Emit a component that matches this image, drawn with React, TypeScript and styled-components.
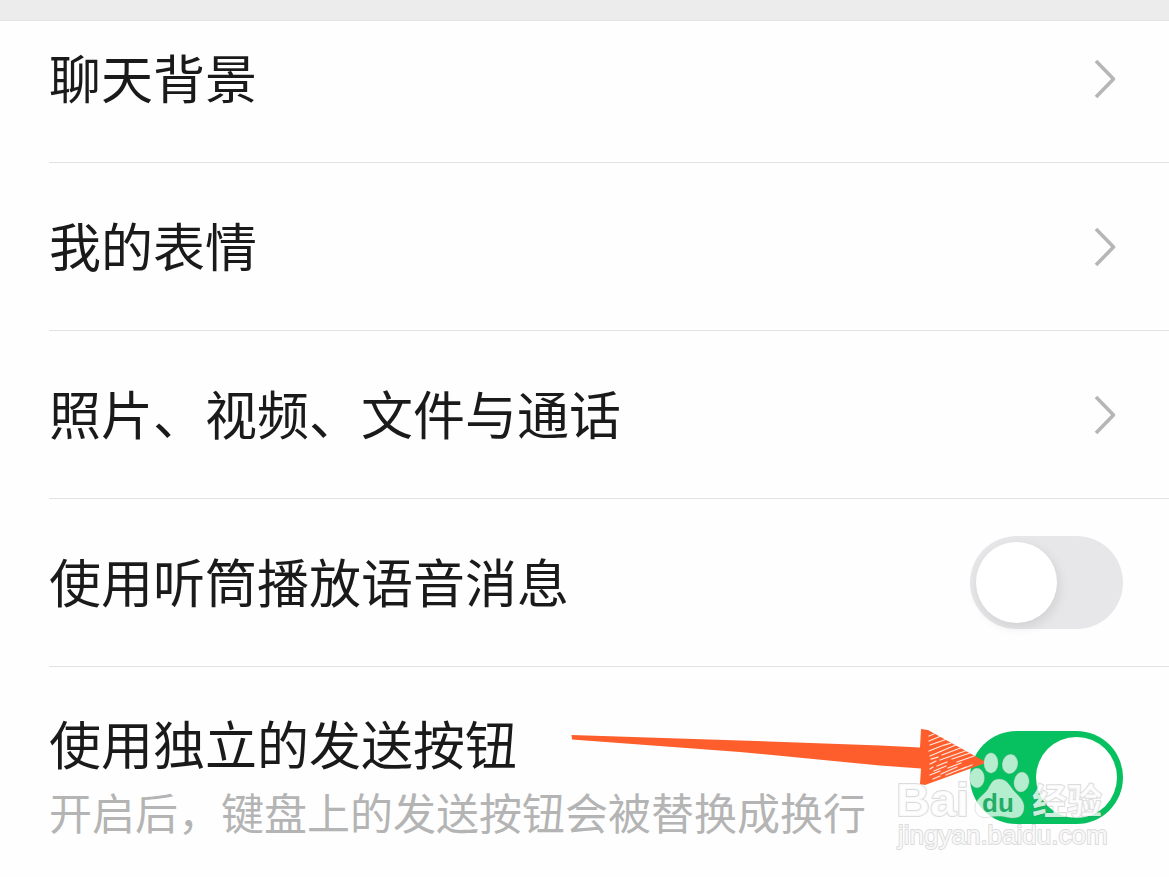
import React, { useState } from "react";
import styled, { createGlobalStyle } from "styled-components";

const GlobalStyle = createGlobalStyle`
  * { box-sizing: border-box; }
  body {
    margin: 0;
    background: #fefefe;
    font-family: "Noto Sans CJK SC", "Liberation Sans", sans-serif;
    color: #1a1a1a;
  }
`;

const Page = styled.main`
  min-height: 100vh;
  overflow: hidden;
`;

const SectionGap = styled.div`
  height: 21px;
  background: #ececec;
  border-bottom: 1px solid #e4e4e4;
`;

const List = styled.ul`
  list-style: none;
  margin: 0;
  padding: 0 0 0 49px;
`;

const Item = styled.li<{ $first?: boolean; $last?: boolean }>`
  position: relative;
  display: flex;
  align-items: center;
  justify-content: space-between;
  height: ${(p) => (p.$first ? 142 : p.$last ? 210 : 168)}px;
  padding-top: ${(p) => (p.$last ? 10 : 0)}px;
  padding-right: 46px;
  padding-bottom: ${(p) => (p.$first ? 26 : 0)}px;
  border-bottom: ${(p) => (p.$last ? "none" : "1px solid #e3e3e3")};
`;

const RowLink = styled.a`
  flex: 1;
  display: flex;
  align-items: center;
  justify-content: space-between;
  padding-right: 6px;
  color: inherit;
  text-decoration: none;
`;

const Caption = styled.span`
  display: flex;
  flex-direction: column;
  padding-bottom: 4px;
`;

const Title = styled.span`
  font-size: 52px;
  line-height: 72px;
  white-space: nowrap;
`;

const Hint = styled.span`
  font-size: 43px;
  line-height: 64px;
  color: #b4b4b4;
  white-space: nowrap;
`;

const Switch = styled.input`
  appearance: none;
  flex: none;
  display: flex;
  align-items: center;
  width: 153px;
  height: 93px;
  margin: 0;
  padding: 0 6px;
  border-radius: 47px;
  background: #e7e7e9;
  cursor: pointer;

  &::before {
    content: "";
    width: 81px;
    height: 81px;
    border-radius: 50%;
    background: #fff;
    box-shadow: 2px 4px 12px rgba(0, 0, 0, 0.1);
  }

  &:checked {
    justify-content: flex-end;
    background: #07c160;
  }

  &:checked::before {
    box-shadow: none;
  }
`;

const Overlay = styled.svg`
  position: absolute;
  right: 0;
  bottom: 0;
  pointer-events: none;
`;

const Chevron = () => (
  <svg width="24" height="42" viewBox="0 0 24 42" fill="none" aria-hidden="true">
    <path d="M3 3 L20.5 21 L3 39" stroke="#b6b6b6" strokeWidth="3.6" strokeLinejoin="round" />
  </svg>
);

const Annotation = () => (
  <Overlay width="609" height="160" viewBox="560 717 609 160" aria-hidden="true">
    <path
      d="M571.5 735 L740 740.5 L880 745.5 L920 747.5 L921 729 L928 730 L984 761 Q986 763 983 764 L925 785 L920 784 L921 768.5 L880 765.5 L740 752 L572 739.5Z"
      fill="#fd5e2b"
    />
    <g stroke="#fff" strokeOpacity="0.85" strokeWidth="1.3" strokeLinecap="round" fill="none">
      <path d="M929 736 L934 734 M929 741 L941 736 M930 745 L950 738 M929 751 L944 745 L951 743 M930 756 L958 744 M931 759 L938 757 M942 755 L963 747 M930 764 L936 761 M940 760 L968 750 M930 769 L933 767 M937 766 L947 762 M952 759 L970 753 M934 771 L946 766 M957 762 L974 756 M930 775 L940 771 M948 768 L961 763 M941 774 L957 767 M933 779 L940 776 M946 775 L966 767 M962 769 L972 765" />
    </g>
    <g fill="#fff" fillOpacity="0.7" stroke="#999" strokeOpacity="0.28" strokeWidth="1">
      <ellipse cx="977" cy="778" rx="7.5" ry="10" />
      <ellipse cx="991" cy="763" rx="7.2" ry="10.2" />
      <ellipse cx="1010" cy="764" rx="7.8" ry="9.8" transform="rotate(10 1010 764)" />
      <ellipse cx="1021.5" cy="782" rx="7.6" ry="10" transform="rotate(8 1021.5 782)" />
      <path d="M999 779 C1008 779 1010 787 1015 792 C1021 798 1025 802 1024 809 C1023 818 1015 819 1008 817.5 C1001 816 997 816 990 817 C982 819 975 816 975 808 C975 799 983 796 988 789 C991 783 993 779 999 779Z" />
    </g>
    <text x="982" y="812" fontFamily="Liberation Sans, sans-serif" fontWeight="700" fontSize="26" fill="#23ae68">du</text>
    <g fill="#fff" fillOpacity="0.8" stroke="#666" strokeOpacity="0.24" strokeWidth="2" strokeLinejoin="round" paintOrder="stroke">
      <text x="896" y="816" fontFamily="Liberation Sans, sans-serif" fontWeight="700" fontSize="47">Bai</text>
      <text x="1032" y="814" fontFamily="Noto Sans CJK SC, sans-serif" fontWeight="700" fontSize="35">经验</text>
      <text x="898" y="844" fontFamily="Liberation Sans, sans-serif" fontSize="26">jingyan.baidu.com</text>
    </g>
  </Overlay>
);

const links = ["聊天背景", "我的表情", "照片、视频、文件与通话"];

export default function App() {
  const [earpiece, setEarpiece] = useState(false);
  const [sendButton, setSendButton] = useState(true);

  return (
    <Page>
      <GlobalStyle />
      <SectionGap />
      <List>
        {links.map((text, i) => (
          <Item key={text} $first={i === 0}>
            <RowLink href="#">
              <Caption>
                <Title>{text}</Title>
              </Caption>
              <Chevron />
            </RowLink>
          </Item>
        ))}
        <Item>
          <Caption as="label" htmlFor="earpiece">
            <Title>使用听筒播放语音消息</Title>
          </Caption>
          <Switch
            id="earpiece"
            type="checkbox"
            role="switch"
            checked={earpiece}
            onChange={(e) => setEarpiece(e.target.checked)}
          />
        </Item>
        <Item $last>
          <Caption as="label" htmlFor="send-button">
            <Title>使用独立的发送按钮</Title>
            <Hint>开启后，键盘上的发送按钮会被替换成换行</Hint>
          </Caption>
          <Switch
            id="send-button"
            type="checkbox"
            role="switch"
            checked={sendButton}
            onChange={(e) => setSendButton(e.target.checked)}
          />
          <Annotation />
        </Item>
      </List>
    </Page>
  );
}
